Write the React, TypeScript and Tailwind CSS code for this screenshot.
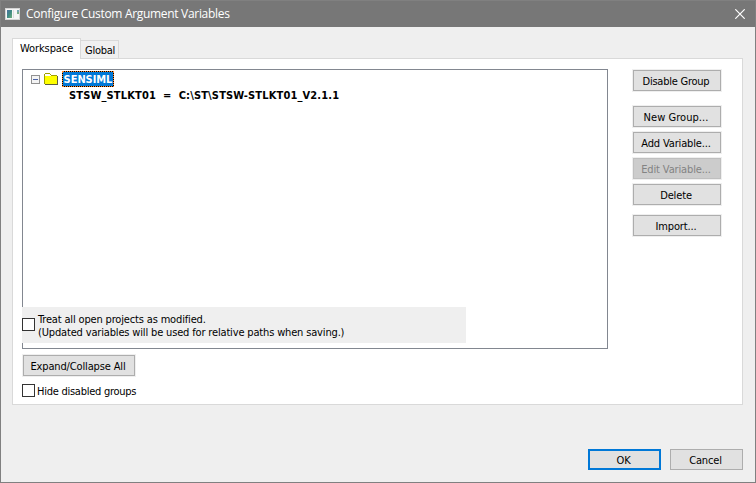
import type { ReactNode } from "react";

function Button({ children, className = "", disabled = false }: { children: ReactNode; className?: string; disabled?: boolean }) {
  return (
    <button
      disabled={disabled}
      className={`flex h-[21px] items-center justify-center whitespace-nowrap border pt-px pr-[2px] ${
        disabled ? "border-[#bfbfbf] bg-[#cccccc] text-[#838383]" : "border-[#adadad] bg-[#e1e1e1]"
      } ${className}`}
    >
      {children}
    </button>
  );
}

const side = "w-[88px] shadow-[0_0_0_1px_#efefef]";

function Checkbox() {
  return <span className="h-[13px] w-[13px] shrink-0 border border-[#333333] bg-white" />;
}

function AppIcon() {
  return (
    <svg width="15" height="12" viewBox="0 0 15 12" shapeRendering="crispEdges">
      <defs>
        <linearGradient id="screen" x1="0" y1="0" x2="1" y2="1">
          <stop offset="0" stopColor="#4a6fa0" />
          <stop offset="0.5" stopColor="#3f8a84" />
          <stop offset="1" stopColor="#72b07c" />
        </linearGradient>
      </defs>
      <path fill="#d4d4d4" d="M0 0h15v12H0z" />
      <path fill="#f6f6f6" d="M1 1h13v10H1z" />
      <path fill="url(#screen)" d="M2 2h5v8H2z" />
      <path fill="#dedede" d="M8 2h1v8H8z" />
      <path fill="#75a5b4" d="M12 2h2v2h-2z" />
      <path fill="#78ad88" d="M12 4h2v2h-2z" />
    </svg>
  );
}

function Folder() {
  return (
    <svg width="14" height="12" viewBox="0 0 14 12" shapeRendering="crispEdges">
      <path fill="#a0a000" d="M1 0h5v1h1v1h6v9h1v1H1v-1H0V1h1z" />
      <path fill="#fff" d="M1 1h5v1h1v1H1z" />
      <path fill="#ff0" d="M1 3h12v8H1z" />
      <path fill="#606040" d="M13 3h1v9H1v-1h12z" />
    </svg>
  );
}

export default function App() {
  return (
    <div className="flex h-[483px] w-[756px] flex-col overflow-hidden border border-[#808080] bg-[#efefef] font-['DejaVu_Sans_Condensed','DejaVu_Sans',sans-serif] text-[11px] leading-[13px] tracking-[-0.14px] text-black">
      <header className="flex h-[26px] shrink-0 items-center bg-[#777777] pl-1 pr-[10px] text-white">
        <AppIcon />
        <h1 className="ml-[6px] grow whitespace-nowrap font-['Open_Sans',sans-serif] text-[12px] leading-4 tracking-[-0.31px]">
          Configure Custom Argument Variables
        </h1>
        <svg className="-mt-px" width="10" height="10" viewBox="0 0 10 10" stroke="white" strokeWidth="1.2">
          <path d="M.3.3l9.4 9.4M9.7.3L.3 9.7" />
        </svg>
      </header>

      <nav className="ml-[11px] mt-[11px] flex h-5 shrink-0 items-end">
        <div className="relative z-10 -mb-px flex h-[21px] w-[69px] border border-b-0 border-[#d9d9d9] bg-white pl-[7px] pt-[3px] tracking-[-0.1px]">
          Workspace
        </div>
        <div className="-ml-px flex h-[18px] w-[39px] border border-b-0 border-[#d9d9d9] bg-[#f0f0f0] pl-[4px] pt-[3px] tracking-[-0.25px]">
          Global
        </div>
      </nav>

      <main className="ml-[11px] flex h-[347px] w-[731px] shrink-0 border border-[#d9d9d9] bg-white pl-[9px] pt-[10px]">
        <section className="w-[586px]">
          <div className="relative h-[280px] border border-[#828790] pl-2 pt-px">
            <div className="flex h-4 items-center">
              <svg width="9" height="9" viewBox="0 0 9 9" shapeRendering="crispEdges">
                <path fill="#919191" d="M0 0h9v9H0z" />
                <path fill="#f4f4f4" d="M1 1h7v7H1z" />
                <path fill="#4b63a7" d="M2 4h5v1H2z" />
              </svg>
              <span className="ml-1">
                <Folder />
              </span>
              <span className="ml-1 flex h-4 w-[52px] border border-dotted border-[#ff8728] bg-black font-bold tracking-[-0.05px] text-white">
                <span className="flex grow items-center justify-center bg-[#0078d7]">SENSIML</span>
              </span>
            </div>
            <div className="ml-[38px] flex h-4 items-center whitespace-pre font-bold tracking-[0.14px]">
              {"STSW_STLKT01  =  C:\\ST\\STSW-STLKT01_V2.1.1"}
            </div>
            <div className="absolute -left-px top-[237px] flex h-9 w-[444px] items-start bg-[#efefef] pt-[11px]">
              <Checkbox />
              <p className="-mt-[5px] ml-[3px] whitespace-nowrap tracking-[-0.16px]">
                Treat all open projects as modified.
                <br />
                (Updated variables will be used for relative paths when saving.)
              </p>
            </div>
          </div>
          <Button className="ml-px mt-[6px] w-[112px] shadow-[0_0_0_1px_#efefef]">Expand/Collapse All</Button>
          <label className="mt-2 flex items-start">
            <Checkbox />
            <span className="ml-[2px] pt-px tracking-[-0.26px]">Hide disabled groups</span>
          </label>
        </section>

        <aside className="ml-[25px] flex flex-col pt-px">
          <Button className={`tracking-[-0.24px] ${side}`}>Disable Group</Button>
          <Button className={`mt-[15px] tracking-[0.05px] ${side}`}>New Group...</Button>
          <Button className={`mt-[5px] ${side}`}>Add Variable...</Button>
          <Button disabled className={`mt-[5px] ${side}`}>Edit Variable...</Button>
          <Button className={`mt-[5px] ${side}`}>Delete</Button>
          <Button className={`mt-[10px] ${side}`}>Import...</Button>
        </aside>
      </main>

      <footer className="mt-11 flex justify-end gap-[9px] pr-3">
        <Button className="w-[73px] outline-2 -outline-offset-2 outline-[#0078d7]">OK</Button>
        <Button className="w-[73px]">Cancel</Button>
      </footer>
    </div>
  );
}
